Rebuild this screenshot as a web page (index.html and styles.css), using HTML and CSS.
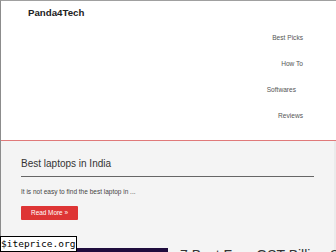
FILE: index.html
```html
<!DOCTYPE html>
<html lang="en">
<head>
<meta charset="UTF-8">
<meta name="viewport" content="width=device-width, initial-scale=1.0">
<title>Panda4Tech</title>
<link rel="stylesheet" href="styles.css">
</head>
<body>

<div class="page">
    <header class="header">
        <div class="logo">Panda4Tech</div>
        <nav class="nav">
            <a href="#">Best Picks</a>
            <a href="#">How To</a>
            <a href="#" class="has-sub">Softwares</a>
            <a href="#">Reviews</a>
        </nav>
    </header>

    <main class="main">
        <article class="post">
            <h2>Best laptops in India</h2>
            <hr>
            <p>It is not easy to find the best laptop in ...</p>
            <a href="#" class="btn">Read More &raquo;</a>
        </article>

        <div class="post-row">
            <div class="thumb"></div>
            <h3>7 Best Free GST Billing Software</h3>
        </div>
    </main>
</div>

<div class="stamp">$iteprice.org</div>

</body>
</html>
```

FILE: styles.css
```css
body {
    margin: 0;
    padding: 0;
    font-family: "Liberation Sans", Arial, sans-serif;
    background-color: #fff;
    overflow: hidden;
}
.page {
    border-left: 1px solid #8c8c8c;
    border-top: 1px solid #a0a0a0;
    height: 251px;
    overflow: hidden;
}
.header {
    padding: 6px 0 11px 0;
    border-bottom: 1px solid #e07a7a;
}
.logo {
    padding-left: 27px;
    font-size: 9.7px;
    line-height: 12px;
    font-weight: bold;
    color: #222;
}
.nav {
    display: flex;
    flex-direction: column;
    align-items: flex-end;
    margin-top: 6px;
    padding-right: 33px;
}
.nav a {
    font-size: 6.6px;
    line-height: 26px;
    color: #555;
    text-decoration: none;
}
.nav a.has-sub {
    margin-right: 7px;
}
.main {
    background-color: #f4f4f4;
    padding: 16px 20px 0 20px;
    border-right: 2px solid #ebebeb;
    min-height: 120px;
}
.post h2 {
    margin: 0;
    font-size: 10px;
    line-height: 13px;
    font-weight: normal;
    color: #333;
}
.post hr {
    margin: 6px 0 0 0;
    border: 0;
    height: 1px;
    background-color: #666;
}
.post p {
    margin: 10px 0 0 0;
    font-size: 6.5px;
    line-height: 9px;
    color: #444;
}
.btn {
    display: inline-block;
    margin-top: 10px;
    width: 57px;
    height: 14px;
    line-height: 14px;
    text-align: center;
    font-size: 6.4px;
    color: #fff;
    background-color: #de3535;
    border-radius: 1px;
    text-decoration: none;
}
.post-row {
    display: flex;
    margin-top: 28px;
    padding-left: 56px;
}
.thumb {
    flex-shrink: 0;
    width: 91px;
    height: 60px;
    background-color: #1f0c3d;
}
.post-row h3 {
    margin: -2px 0 0 12px;
    font-size: 14px;
    line-height: 18px;
    font-weight: normal;
    color: #333;
    white-space: nowrap;
}
.stamp {
    position: absolute;
    left: 0;
    top: 236px;
    width: 75px;
    height: 14px;
    background-color: #fff;
    border: 1px solid #000;
    font-family: "DejaVu Sans Mono", monospace;
    font-size: 9.5px;
    line-height: 14px;
    color: #000;
    white-space: nowrap;
}
```
